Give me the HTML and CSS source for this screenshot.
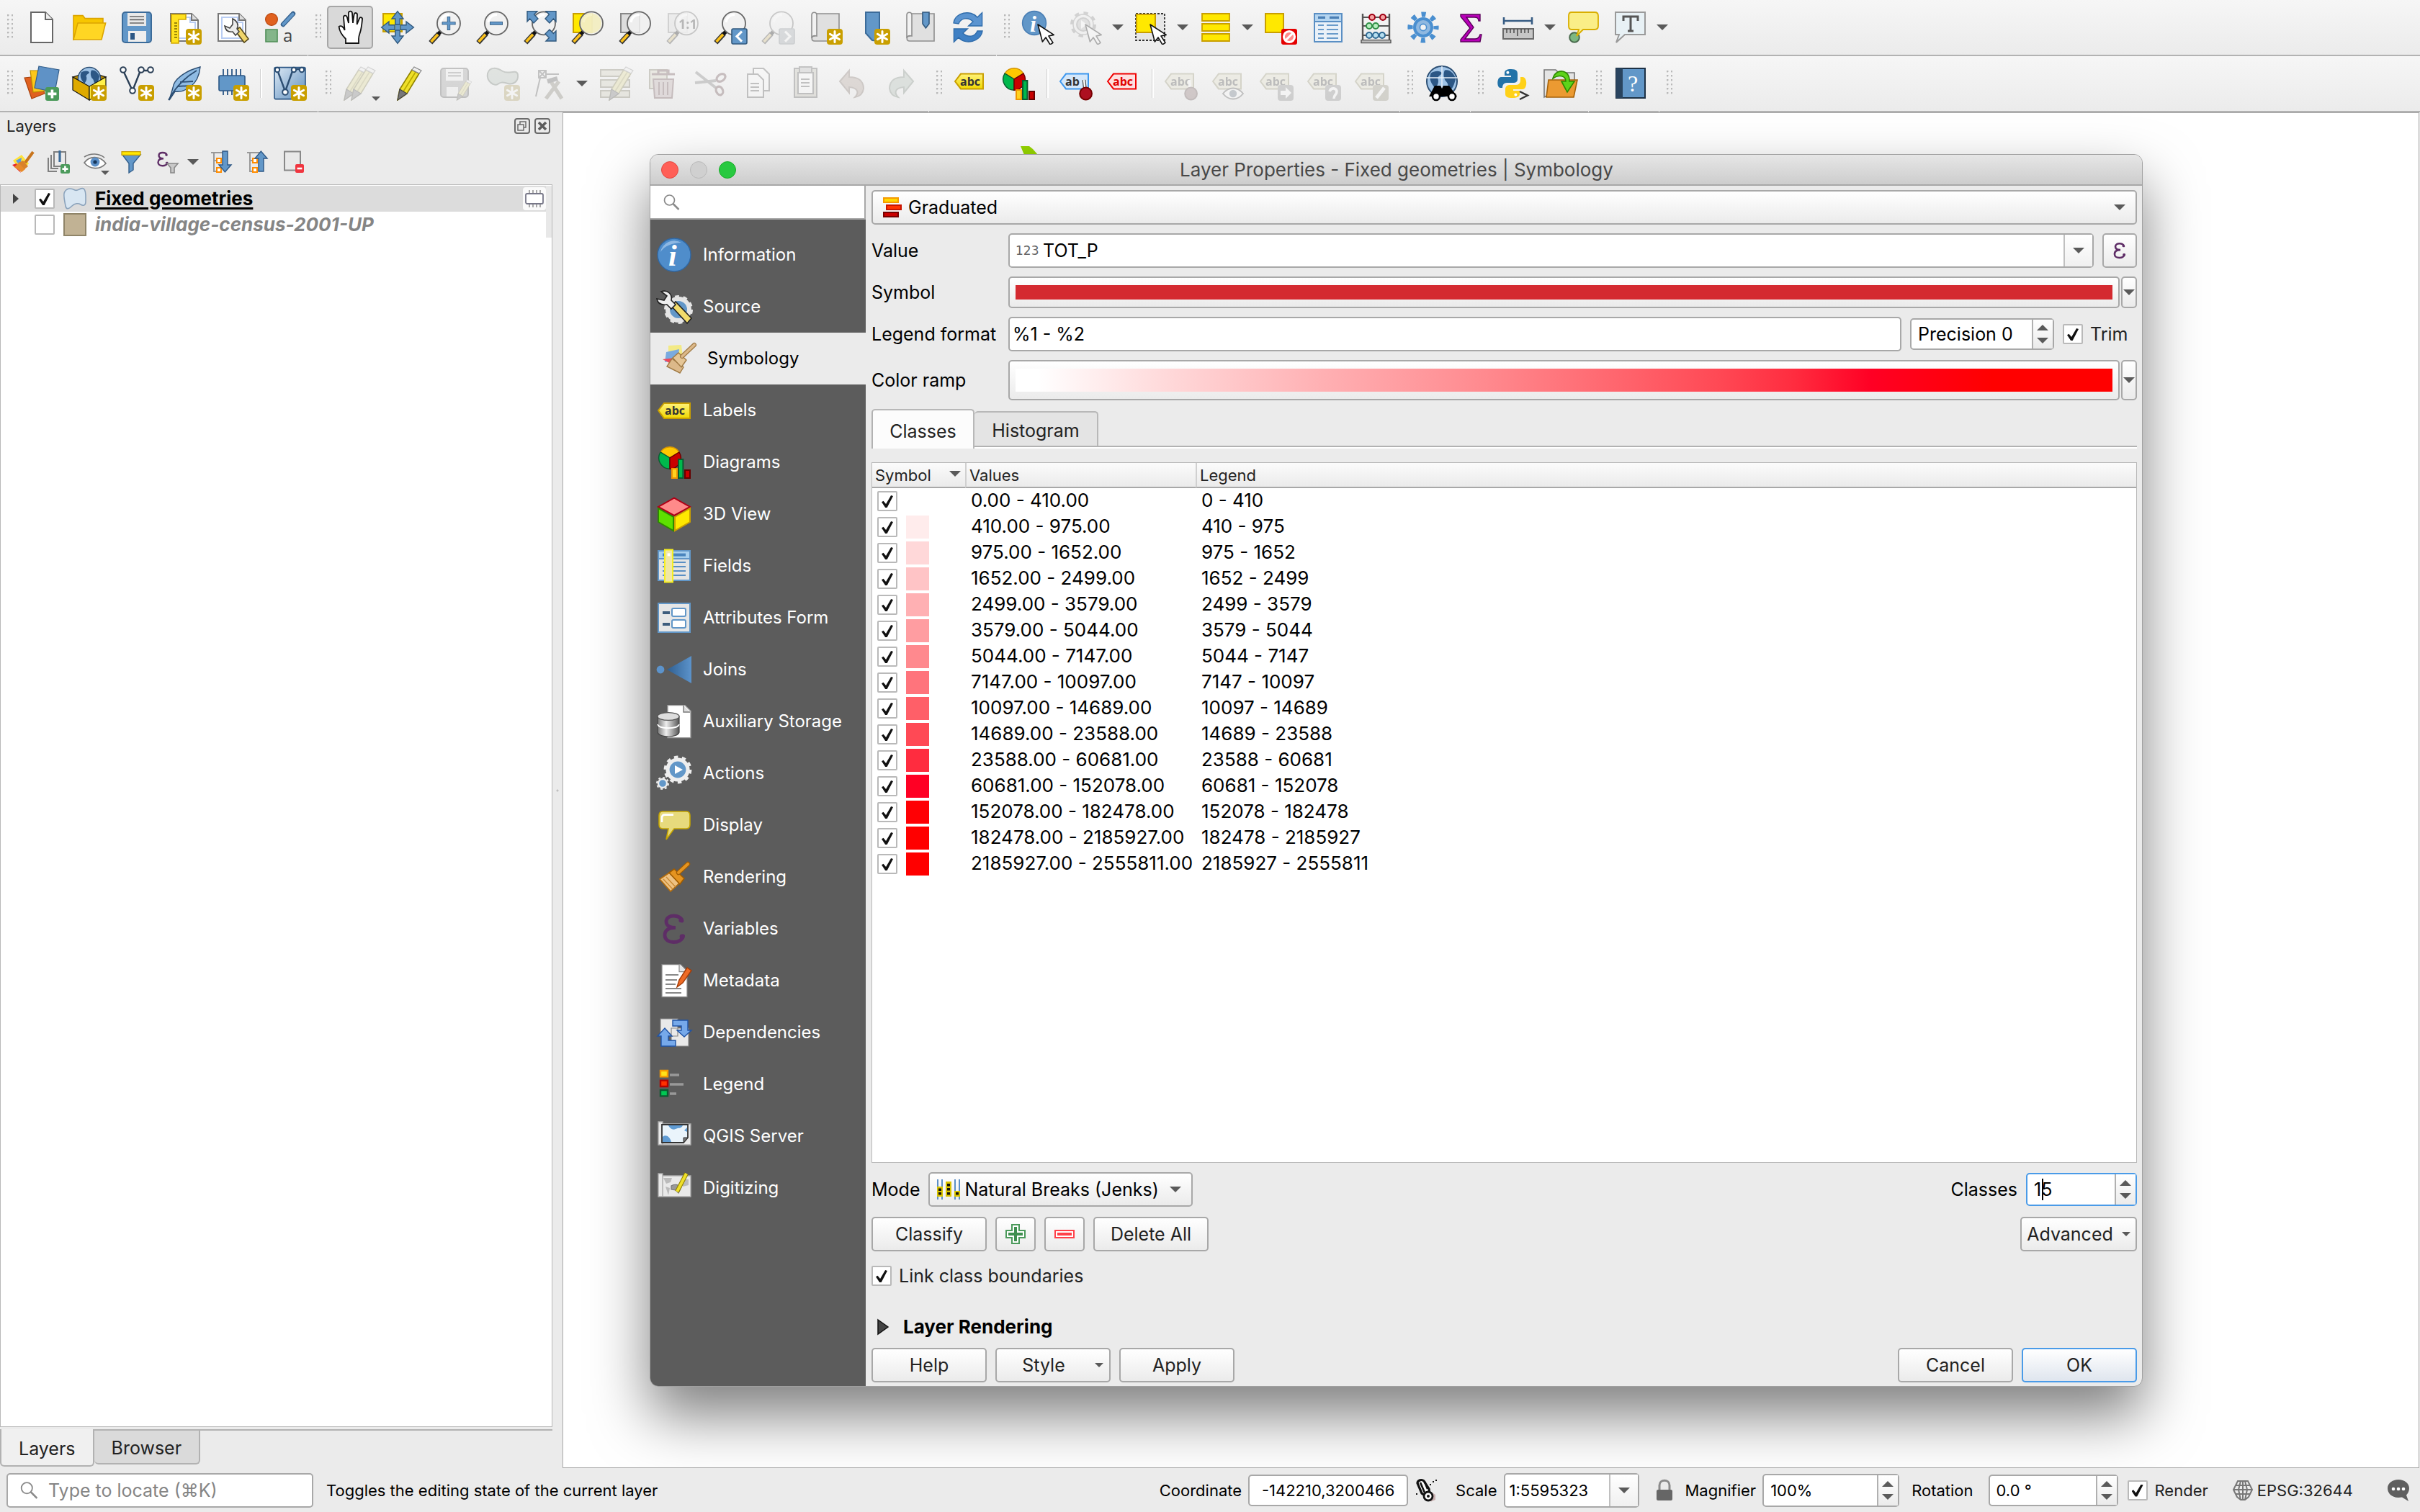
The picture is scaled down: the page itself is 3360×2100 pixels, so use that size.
FILE: index.html
```html
<!DOCTYPE html>
<html lang="en">
<head>
    <meta charset="UTF-8">
    <meta name="viewport" content="width=device-width, initial-scale=1.0">
    <title>Layer Properties - Fixed geometries | Symbology</title>
    <link rel="stylesheet" href="styles.css">
</head>
<body>
    <!-- shared icon parts -->
    <svg class="defs" width="0" height="0">
        <defs>
            <linearGradient id="g-blue" x1="0" y1="0" x2="1" y2="1"><stop offset="0" stop-color="#dbe8f4"/><stop offset="1" stop-color="#5f8fbf"/></linearGradient>
            <linearGradient id="g-yellow" x1="0" y1="0" x2="0" y2="1"><stop offset="0" stop-color="#fff27a"/><stop offset="1" stop-color="#f0d800"/></linearGradient>
            <linearGradient id="g-join" x1="0" y1="0" x2="1" y2="0"><stop offset="0" stop-color="#2f5f91"/><stop offset="1" stop-color="#5c93cb"/></linearGradient>
            <linearGradient id="g-disk" x1="0" y1="0" x2="1" y2="0"><stop offset="0" stop-color="#777"/><stop offset=".4" stop-color="#eee"/><stop offset="1" stop-color="#555"/></linearGradient>
        </defs>
        <symbol id="badge-new" viewBox="0 0 24 24">
            <rect x="13" y="13" width="11" height="11" rx="2" fill="#c99f00"/>
            <path d="M18.5 14.7v7.6M15.2 16.6l6.6 3.8M21.8 16.6l-6.6 3.8" stroke="#fff" stroke-width="1.5" stroke-linecap="round"/>
        </symbol>
        <symbol id="mag" viewBox="0 0 24 24">
            <path d="M1.9 22.6L7.6 16.4" stroke="#333" stroke-width="3.4"/>
            <path d="M2.3 22L7 16.9" stroke="#fcc21b" stroke-width="1.8"/>
            <path d="M7.2 16.8L9.4 14.4" stroke="#111" stroke-width="2.6"/>
            <circle cx="14.5" cy="9.2" r="8" fill="#f1f1f1" fill-opacity=".85" stroke="#666" stroke-width=".9"/>
            <path d="M9 8.5a5.8 5.8 0 0 1 6-5.3" stroke="#fff" stroke-width="1.6" fill="none"/>
        </symbol>
        <symbol id="cursor" viewBox="0 0 24 24">
            <path d="M11.5 10l3.2 12 2.3-3 3 5 2-1.3-3-4.7 3.6-.8z" fill="#fff" stroke="#111" stroke-width=".8" stroke-linejoin="round"/>
        </symbol>
        <symbol id="scroll" viewBox="0 0 24 24">
            <path d="M5 2.5h16.5v19H4.5C2 21.5 2 18 4.5 18z" fill="#e0e0e0" stroke="#8e8e8e" stroke-width=".8"/>
            <path d="M2.5 19.5V3.5C2.5 1 6 1 6 3.5V18C4 17.5 2.5 18 2.5 19.5z" fill="#f2f2f2" stroke="#8e8e8e" stroke-width=".8"/>
        </symbol>
        <symbol id="tag-grey" viewBox="0 0 24 24">
            <path d="M1 10.5L5 5.3h15.5v10.4H5z" fill="#e7e0a4" stroke="#9d9340"/>
            <text x="4.5" y="13.5" class="tag-text" fill="#444">abc</text>
        </symbol>
        <symbol id="tag-yellow" viewBox="0 0 24 24">
            <path d="M1 12L5 7h18v10.500H5z" fill="url(#g-yellow)" stroke="#c99f00"/>
            <text x="5.5" y="15" class="tag-text" fill="#333">abc</text>
        </symbol>
        <symbol id="arrow-up" viewBox="0 0 24 24">
            <path d="M12 .8L16 6h-2.400v4h-3.200V6H8z" fill="#6297c8" stroke="#30587d" stroke-width=".7"/>
        </symbol>
        <symbol id="diagram" viewBox="0 0 24 24">
            <path d="M9 9L2.5 5A7.6 7.6 0 0 1 15.5 5z" fill="#ffc800" stroke="#d69500" stroke-width=".7"/>
            <path d="M9 9v7.600A7.6 7.6 0 0 1 2.5 5z" fill="#00b84c" stroke="#0a5a30" stroke-width=".7"/>
            <path d="M9 9v7.600A7.6 7.6 0 0 0 15.5 5z" fill="#c80000" stroke="#600" stroke-width=".7"/>
            <path d="M10.5 16.500h3.500v6.500h-3.500z" fill="#ffd21f" stroke="#f09600"/>
            <path d="M15 10h3.200v13H15z" fill="#00b84c" stroke="#0a5a30"/>
            <path d="M19.5 17.500h3.500v5.500h-3.500z" fill="#c80000" stroke="#600"/>
        </symbol>
        <symbol id="page" viewBox="0 0 24 24">
            <path d="M2.5 2.500h14.500l4.500 4.500v14.500h-19z" fill="#fff" stroke="#777"/>
            <path d="M5 5h11v3.500h3.500v11H5z" fill="none" stroke="#b9cdf3"/>
            <path d="M17 2.500v4.500h4.500" fill="#ddd" stroke="#777"/>
        </symbol>
        <symbol id="search" viewBox="0 0 24 24">
            <circle cx="9.5" cy="9" r="7" fill="none" stroke="#8a8a8a" stroke-width="1.7"/>
            <path d="M14.5 14l8 8" stroke="#8a8a8a" stroke-width="2.5"/>
        </symbol>
        <symbol id="down" viewBox="0 0 16 8"><path d="M0 0h16L8 8z" fill="#5a5a5a"/></symbol>
        <symbol id="up" viewBox="0 0 16 8"><path d="M0 8h16L8 0z" fill="#5a5a5a"/></symbol>
        <symbol id="epsilon" viewBox="0 0 24 24">
            <path d="M17.5 6.500C17 2 6.500 1.500 6.500 7c0 3 3 4.200 6.500 4.200-4.500 0-7.500 1.300-7.500 5.300 0 6.500 12 6 12.800.5" fill="none" stroke="#5e2d66" stroke-width="2.4" stroke-linecap="round"/>
            <circle cx="16.8" cy="6" r="1.6" fill="#5e2d66"/><circle cx="17.5" cy="17.5" r="1.7" fill="#5e2d66"/>
        </symbol>
        <symbol id="globe" viewBox="0 0 24 24">
            <circle cx="12" cy="12" r="11" fill="#9fc3e6" stroke="#2c4f74"/>
            <path d="M4 6c3-2 7-2 8 0-1 2-3 2-3 4 1 2 0 5-2 7-2-3-5-6-3-11zM14 4c4-1 7 3 8 6-1 4-2 7-4 8-2-2-1-4-3-6-2-2-2-6-1-8z" fill="#2c5785"/>
        </symbol>
        <symbol id="pencil" viewBox="0 0 24 24">
            <path d="M5 23.500L6.500 16 15 2.500l5 2.500-8.500 14z" fill="#efe02a" stroke="#8f8200" stroke-width=".8"/>
            <path d="M9 17.500L17.500 4" stroke="#b8a800" stroke-width=".8"/>
            <path d="M5 23.500L6.500 16l5 3z" fill="#777" stroke="#444" stroke-width=".6"/>
            <path d="M15 2.500L16.500.5l5 2.500-1.500 2z" fill="#eee" stroke="#888" stroke-width=".6"/>
        </symbol>
    </svg>

    <div class="app">
        <div class="toolbar">
            <div class="group">
                <span class="handle"></span>
                <button class="tool" aria-label="New project"><svg viewBox="0 0 24 24"><path d="M4.500 1.500h10l5 5v16h-15z" fill="#fff" stroke="#666"/><path d="M14.500 1.500v5h5" fill="#eee" stroke="#666"/></svg></button>
                <button class="tool" aria-label="Open project"><svg viewBox="0 0 24 24"><path d="M1 20.500V3.800h6.500l1.500 2h12.500V12z" fill="#f7c600" stroke="#dba400" stroke-width=".8"/><path d="M1 20.500L4 9h19.300L20.500 20.500z" fill="#ffd623" stroke="#dba400" stroke-width=".8"/></svg></button>
                <button class="tool" aria-label="Save project"><svg viewBox="0 0 24 24"><rect x="2" y="1.5" width="20" height="21" rx="2" fill="#6297c8" stroke="#3b6b99"/><path d="M5.500 2h13v9h-13z" fill="#e9e9e9"/><path d="M7 4.500h10M7 6.700h10M7 9h10" stroke="#666" stroke-width=".8"/><path d="M6 14.500h12.500v7.500H6z" fill="#eee"/><path d="M7.500 16h3v4.500h-3z" fill="#2c5785"/></svg></button>
                <button class="tool" aria-label="New print layout"><svg viewBox="0 0 24 24"><use href="#page"/><path d="M3 3h10v3.500H8V23H3z" fill="#ffe21f" stroke="#d3a900" stroke-width=".8"/><path d="M5 9h2M5 11h2M5 13h2M5 15h2M5 17h2M5 19h2" stroke="#7a6700" stroke-width=".7"/><use href="#badge-new"/></svg></button>
                <button class="tool" aria-label="Layout manager"><svg viewBox="0 0 24 24"><use href="#page"/><path d="M14 14l6.500 8.500 3-2.500-6-8z" fill="#f0d56a" stroke="#55471a" stroke-width=".8"/><path d="M12.500 6c3 1.500 4.500 4 3 7l1.500 2-2.500 2.500-2-2.500c-3 .5-5-1-5.500-4l3.500 1.500 2-2.500z" fill="#ececec" stroke="#444" stroke-width=".8"/></svg></button>
                <button class="tool" aria-label="Style manager"><svg viewBox="0 0 24 24"><circle cx="6.5" cy="6.5" r="4.2" fill="#e0611f" stroke="#b8460e" stroke-width=".6"/><path d="M14.500 10l7-7.500" stroke="#335f8c" stroke-width="3.2" stroke-linecap="round"/><path d="M14.700 9.800l6.600-7" stroke="#6297c8" stroke-width="2" stroke-linecap="round"/><path d="M2.500 13.500h8v8.500h-8z" fill="#84b58a" stroke="#4f8e57" stroke-width=".8"/><text x="14.5" y="22" font-size="12" font-family="Open Sans, sans-serif" fill="#444">a</text></svg></button>
            </div>
            <div class="group">
                <span class="handle"></span>
                <button class="tool active" aria-label="Pan map"><svg viewBox="0 0 24 24"><path d="M9 23V20C6.500 17.500 4.500 14 4.300 11.500c1.500-1.200 3 0 4 2.500L7.500 5c0-1.500 2-1.700 2.400-.2L11 9 11 2c0-1.600 2.300-1.600 2.500 0L14 9l.8-6c.3-1.500 2.300-1.200 2.200.3L16.800 10l1.700-4.200c.5-1.300 2.300-.7 2 .7-.3 3-.5 6-1.500 9-.5 1.500-1 2.500-1 4.500v3z" fill="#fff" stroke="#111" stroke-width=".9"/></svg></button>
                <button class="tool" aria-label="Pan map to selection"><svg viewBox="0 0 24 24"><path d="M2 2.500h13v12.500H2z" fill="#ffe800" stroke="#c99f00"/><path d="M10.500 10h3v4h-3z" fill="#6297c8"/><use href="#arrow-up"/><use href="#arrow-up" transform="rotate(90 12 12)"/><use href="#arrow-up" transform="rotate(180 12 12)"/><use href="#arrow-up" transform="rotate(270 12 12)"/></svg></button>
                <button class="tool" aria-label="Zoom in"><svg viewBox="0 0 24 24"><use href="#mag"/><path d="M14.500 4.500v9.500M9.800 9.200h9.500" stroke="#30587d" stroke-width="2.2"/><path d="M14.500 4.900v8.700M10.200 9.200h8.700" stroke="#6297c8" stroke-width="1.5"/></svg></button>
                <button class="tool" aria-label="Zoom out"><svg viewBox="0 0 24 24"><use href="#mag"/><path d="M10 9.200h9" stroke="#30587d" stroke-width="2.4"/><path d="M10.400 9.200h8.200" stroke="#6297c8" stroke-width="1.6"/></svg></button>
                <button class="tool" aria-label="Zoom full"><svg viewBox="0 0 24 24"><use href="#mag"/><path d="M3 .8h7L7.800 3l2.700 3-3 3-2.700-3L3 8zM23 .8h-7L18.200 3l-2.700 3 3 3 2.700-3L23 8zM23 21.500h-7l2.200-2.200-2.700-2.800 3-3 2.700 2.800 1.800-1.800z" fill="#6297c8" stroke="#30587d" stroke-width=".7"/></svg></button>
                <button class="tool" aria-label="Zoom to selection"><svg viewBox="0 0 24 24"><path d="M2 2.500h13v13H2z" fill="#ffe800" stroke="#c99f00"/><use href="#mag"/><circle cx="14.5" cy="9.2" r="7" fill="#f3edb0" opacity=".7"/></svg></button>
                <button class="tool" aria-label="Zoom to layer"><svg viewBox="0 0 24 24"><path d="M2 2.500h13v13H2z" fill="#ddd" stroke="#888"/><use href="#mag"/></svg></button>
                <button class="tool" disabled aria-label="Zoom native"><svg viewBox="0 0 24 24"><path d="M2 2.500h13v13H2z" fill="#ddd" stroke="#888"/><use href="#mag"/><text x="9" y="13" font-size="9" font-weight="700" font-family="Open Sans, sans-serif" fill="#333">1:1</text></svg></button>
                <button class="tool" aria-label="Zoom last"><svg viewBox="0 0 24 24"><use href="#mag"/><rect x="13" y="13" width="10.5" height="10.5" rx="1" fill="#6297c8" stroke="#30587d" stroke-width=".8"/><path d="M20 14.800l-3.500 3.500 3.500 3.500" stroke="#fff" stroke-width="1.6" fill="none"/></svg></button>
                <button class="tool" disabled aria-label="Zoom next"><svg viewBox="0 0 24 24"><use href="#mag"/><rect x="13" y="13" width="10.5" height="10.5" rx="1" fill="#9ab" stroke="#789" stroke-width=".8"/><path d="M17 14.800l3.500 3.500-3.500 3.500" stroke="#fff" stroke-width="1.6" fill="none"/></svg></button>
                <button class="tool" aria-label="New map view"><svg viewBox="0 0 24 24"><use href="#scroll"/><use href="#badge-new"/></svg></button>
                <button class="tool" aria-label="New bookmark"><svg viewBox="0 0 24 24"><path d="M7 1.500h9.500v20L11.500 21 7 16z" fill="#6297c8" stroke="#3b6b99"/><use href="#badge-new"/></svg></button>
                <button class="tool" aria-label="Show bookmarks"><svg viewBox="0 0 24 24"><use href="#scroll"/><path d="M13.500 1.500h4.500v8l-2.300 3-2.200-3z" fill="#6297c8" stroke="#30587d" stroke-width=".8"/></svg></button>
                <button class="tool" aria-label="Refresh"><svg viewBox="0 0 24 24"><path d="M2 9C3 1.500 14 -.5 18.500 5l3.300-3.200V11h-9.500l3.200-3C12 4.500 7 5.500 5.500 9.500z" fill="#5b94d0" stroke="#2f6cab" stroke-width=".7"/><path d="M22 14.500C21 22 10 24.500 5.500 19l-3.300 3.200V13h9.500l-3.200 3c3.500 3.500 8.500 2.500 10-1.500z" fill="#3f80c4" stroke="#2f6cab" stroke-width=".7"/></svg></button>
            </div>
            <div class="group wide">
                <span class="handle"></span>
                <button class="tool" aria-label="Identify features"><svg viewBox="0 0 24 24"><circle cx="9" cy="9" r="8.2" fill="#6297c8" stroke="#4a7fb5" stroke-width=".8"/><text x="6" y="15" font-size="16" font-weight="700" font-style="italic" font-family="Liberation Serif, serif" fill="#fff">i</text><use href="#cursor"/></svg></button>
                <button class="tool menu" disabled aria-label="Run feature action"><svg viewBox="0 0 24 24"><circle cx="10" cy="10" r="8" fill="#eee" stroke="#888" stroke-width="2" stroke-dasharray="3.14 3.14"/><circle cx="10" cy="10" r="7" fill="#eee" stroke="#888" stroke-width=".7"/><circle cx="10" cy="10" r="4.5" fill="#bbb" stroke="#888"/><path d="M8.500 7v6l4-3z" fill="#fff"/><use href="#cursor"/></svg><svg class="drop"><use href="#down"/></svg></button>
                <button class="tool menu" aria-label="Select features"><svg viewBox="0 0 24 24"><path d="M1.500 2.500h20v18.500h-20z" fill="#e6e6e6" stroke="#333" stroke-width=".9" stroke-dasharray="1.500 1"/><path d="M2 3h13v12.500H2z" fill="#ffe800" stroke="#c99f00"/><use href="#cursor"/></svg><svg class="drop"><use href="#down"/></svg></button>
                <button class="tool menu" aria-label="Select by value"><svg viewBox="0 0 24 24"><path d="M2.500 2.500h19v5h-19zM2.500 9.500h19v5h-19zM2.500 16.500h19v5h-19z" fill="#ffe800" stroke="#c99f00" stroke-width=".9"/></svg><svg class="drop"><use href="#down"/></svg></button>
                <button class="tool" aria-label="Deselect"><svg viewBox="0 0 24 24"><path d="M1.500 2.500h12.500V15.500H1.500z" fill="#ffe800" stroke="#c99f00"/><rect x="12.5" y="13" width="11" height="11" rx="1.5" fill="#e50000"/><circle cx="18" cy="18.5" r="3.8" fill="#ff8a8a" stroke="#fff" stroke-width="1.5"/><path d="M15.500 21l5-5" stroke="#fff" stroke-width="1.5"/></svg></button>
                <button class="tool" aria-label="Open attribute table"><svg viewBox="0 0 24 24"><path d="M2.500 2.500h19v19.500h-19z" fill="#eaf1f8" stroke="#5a8fc4"/><path d="M2.500 2.500h19v5.500h-19z" fill="#b5d5f0" stroke="#5a8fc4"/><path d="M5 5.200h5M13 5.200h6.500" stroke="#4a7fb5" stroke-width="1.6"/><path d="M5 10.500h4M11 10.500h8M5 13.500h4M11 13.500h8M5 16.500h4M11 16.500h8M5 19.500h4M11 19.500h8" stroke="#6a9bca" stroke-width="1.1"/></svg></button>
                <button class="tool" aria-label="Field calculator"><svg viewBox="0 0 24 24"><path d="M3 2.500v19M21.500 2.500v19" stroke="#555" stroke-width="1.2"/><path d="M3 5h18.500M3 11h18.500M3 17.500h18.500" stroke="#555" stroke-width=".9"/><g fill="#f5a3a3" stroke="#a00014"><circle cx="9.5" cy="5" r="2"/><circle cx="17" cy="5" r="2"/></g><g fill="#b8efc0" stroke="#2f8f46"><circle cx="7.5" cy="11" r="2"/><circle cx="12" cy="11" r="2"/></g><g fill="#b8dff0" stroke="#306a94"><circle cx="7.5" cy="17.5" r="2"/><circle cx="12" cy="17.5" r="2"/><circle cx="16.5" cy="17.5" r="2"/></g><path d="M2 20.800h20.500v2H2z" fill="#bbb" stroke="#555" stroke-width=".7"/></svg></button>
                <button class="tool" aria-label="Processing toolbox"><svg viewBox="0 0 24 24"><circle cx="12" cy="12" r="9" fill="none" stroke="#4a8fd0" stroke-width="3.6" stroke-dasharray="3 4.07" stroke-dashoffset="1.5"/><circle cx="12" cy="12" r="6" fill="#8fb8e0" stroke="#4a8fd0" stroke-width="2"/><circle cx="12" cy="12" r="2.3" fill="#f2f2f2" stroke="#4a8fd0" stroke-width=".8"/></svg></button>
                <button class="tool" aria-label="Statistical summary"><svg viewBox="0 0 24 24"><path d="M5 3h13.500v4.500h-1c-.3-2-1-2.500-3-2.500H9l5 7-6 8h7c2 0 3-1 3.500-3h1l-1 5H5v-1.500L11.500 12.500 5 4.500z" fill="#b800b8" stroke="#5c005c" stroke-width=".7"/></svg></button>
                <button class="tool menu" aria-label="Measure line"><svg viewBox="0 0 24 24"><path d="M2 7.500h19.500M2 5v5M21.500 5v5" stroke="#385d84" stroke-width="1.3"/><path d="M1.500 13h21v7h-21z" fill="#c6c6c6" stroke="#6a6a6a"/><path d="M4 13v3M6.500 13v3M9 13v3M11.500 13v5M14 13v3M16.500 13v3M19 13v3" stroke="#444" stroke-width=".7"/></svg><svg class="drop"><use href="#down"/></svg></button>
                <button class="tool" aria-label="Map tips"><svg viewBox="0 0 24 24"><circle cx="6" cy="19" r="3.4" fill="#7cb782" stroke="#4b6b4e"/><path d="M4 1.500h16c2 0 2.500 1 2.500 2.500v7c0 2-1 2.500-2.500 2.500h-8L7.500 18l1.500-4.500H4c-1.500 0-2-1-2-2.500V4c0-1.500.5-2.500 2-2.500z" fill="#faee87" stroke="#d9ae00" stroke-width=".9"/></svg></button>
                <button class="tool menu" aria-label="Text annotation"><svg viewBox="0 0 24 24"><path d="M1.500 1.500h20.500v15.500H8L2 22.500 4 17H1.500z" fill="#e8f1f5" stroke="#9a9a9a"/><path d="M7 7.500v-3h10v3M12 4.500v10M10 14.500h4" fill="none" stroke="#555" stroke-width="1.5"/></svg><svg class="drop"><use href="#down"/></svg></button>
            </div>
        </div>

        <div class="toolbar">
            <div class="group">
                <span class="handle"></span>
                <button class="tool" aria-label="Data source manager"><svg viewBox="0 0 24 24"><path d="M0 8l10-1 4 12-9 3.500z" fill="#e0611f" stroke="#a8410c" stroke-width=".6"/><path d="M4 3h12v14l-10 1z" fill="#fcc71a" stroke="#b98b00" stroke-width=".6"/><path d="M10 0l14 2.500-3 15.500L7 15z" fill="#5f92c6" stroke="#335f8c" stroke-width=".6"/><rect x="14.5" y="14.5" width="9.5" height="9.5" rx="1.5" fill="#4b9a5b"/><path d="M19.200 16.200v6M16.200 19.200h6" stroke="#fff" stroke-width="1.8"/></svg></button>
                <button class="tool" aria-label="New GeoPackage layer"><svg viewBox="0 0 24 24"><path d="M.5 7.500L12 4l11.500 3.500L12 14z" fill="#b98b00" stroke="#111" stroke-width=".6"/><use href="#globe" x="3.500" y="0" width="17" height="17"/><path d="M.5 7.500L12 14v9.500L.5 16.500z" fill="#deaa00" stroke="#111" stroke-width=".6"/><path d="M23.500 7.500L12 14v9.500l11.500-7z" fill="#fff04a" stroke="#111" stroke-width=".6"/><use href="#badge-new"/></svg></button>
                <button class="tool" aria-label="New shapefile layer"><svg viewBox="0 0 24 24"><path d="M2.500 3L9 17l5.500-14h7" fill="none" stroke="#2b3f56" stroke-width="1.2"/><g fill="#fff" stroke="#2b3f56"><circle cx="2.500" cy="2.500" r="1.9"/><circle cx="9" cy="17" r="1.9"/><circle cx="15" cy="2.500" r="1.9"/><circle cx="21.500" cy="2.500" r="1.9"/></g><use href="#badge-new"/></svg></button>
                <button class="tool" aria-label="New SpatiaLite layer"><svg viewBox="0 0 24 24"><path d="M1.500 23.500L4 15C4.500 9 13 3 23 .5c-.5 5-2 10-6.500 13.500-3 2.500-7 4-11 3.500z" fill="#8fbbe3" stroke="#2b4d72" stroke-width=".7"/><path d="M1 23.500C6 14 12 8 20.500 3M9 11l9-.5M7 14l9-.5" stroke="#2b4d72" stroke-width=".9" fill="none"/><use href="#badge-new"/></svg></button>
                <button class="tool" aria-label="New memory layer"><svg viewBox="0 0 24 24"><path d="M6 2v18M9 2v18M12 2v18M15 2v14M18 2v14" stroke="#2c5785" stroke-width=".9"/><rect x="3" y="6.5" width="18" height="10.5" rx="1" fill="#6297c8" stroke="#2c5785" stroke-width=".8"/><use href="#badge-new"/></svg></button>
                <span class="sep"></span>
                <button class="tool" aria-label="New virtual layer"><svg viewBox="0 0 24 24"><rect x="1.5" y=".8" width="21.5" height="22" rx="1" fill="url(#g-blue)" stroke="#2c5785" stroke-width=".8"/><path d="M3.500 2.500L9 17.500 14.500 2h8" fill="none" stroke="#2b4d72" stroke-width="1.2"/><g fill="#fff" stroke="#2b4d72"><circle cx="3.500" cy="2.500" r="1.6"/><circle cx="9" cy="18" r="1.9"/><circle cx="15" cy="2.500" r="1.6"/><circle cx="20.500" cy="2.500" r="1.6"/></g><use href="#badge-new"/></svg></button>
            </div>
            <div class="group">
                <span class="handle"></span>
                <button class="tool corner" disabled aria-label="Current edits"><svg viewBox="0 0 24 24"><use href="#pencil" x="-4"/><use href="#pencil" x="1"/></svg><svg class="drop"><use href="#down"/></svg></button>
                <button class="tool" aria-label="Toggle editing"><svg viewBox="0 0 24 24"><use href="#pencil"/></svg></button>
                <button class="tool" disabled aria-label="Save layer edits"><svg viewBox="0 0 24 24"><rect x="2" y="1.5" width="19" height="20" rx="2" fill="#999" stroke="#555"/><path d="M5.500 2h12v8h-12z" fill="#eee"/><path d="M7 4.500h9M7 6.700h9" stroke="#555" stroke-width=".8"/><path d="M6 14.500h8v6.500H6z" fill="#eee"/><use href="#pencil" x="10" y="9" width="15" height="15"/></svg></button>
                <button class="tool" disabled aria-label="Add polygon"><svg viewBox="0 0 24 24"><path d="M1.500 5C3 0 8 1 12 3.500s10-2 10.500 2.500-3 7-7 6-5-1-7 .5S.5 11 1.500 5z" fill="#a9c4ae" stroke="#5c7560"/><use href="#badge-new"/></svg></button>
                <button class="tool menu" disabled aria-label="Vertex tool"><svg viewBox="0 0 24 24"><path d="M4 3h5v5H4zM4 3l5 5M9 3L4 8M9 5.500h9M5 8L2 21" fill="none" stroke="#555"/><path d="M9 22.500l9-12M12 10l8 12.500" stroke="#888060" stroke-width="2.6"/><path d="M10 10.500l7-2" stroke="#555" stroke-width="3"/></svg><svg class="drop"><use href="#down"/></svg></button>
                <button class="tool" disabled aria-label="Modify attributes"><svg viewBox="0 0 24 24"><path d="M2 2.500h20v4.500H2zM2 9.500h20v5H2zM2 17h20v4.500H2z" fill="#d8d2a0" stroke="#7f7840"/><use href="#pencil" x="3"/></svg></button>
                <button class="tool" disabled aria-label="Delete selected"><svg viewBox="0 0 24 24"><path d="M3 2.500h12v13H3z" fill="#d8d2a0" stroke="#7f7840"/><path d="M4.500 5.500h16M9 5V3h7v2" stroke="#8b3f48" stroke-width="1.6" fill="none"/><path d="M5.500 9h14l-1 13h-12z" fill="#d3a2a8" stroke="#8b3f48"/><path d="M9.500 11v9M12.500 11v9M15.500 11v9" stroke="#8b3f48"/></svg></button>
                <button class="tool" disabled aria-label="Cut features"><svg viewBox="0 0 24 24"><path d="M2 4l14 11M1.500 11.500L16 10" stroke="#777" stroke-width="2"/><g fill="none" stroke="#8b3f48" stroke-width="1.6"><ellipse cx="19.500" cy="8" rx="3.300" ry="2.300" transform="rotate(-35 19.500 8)"/><ellipse cx="18.500" cy="17" rx="2.300" ry="3" transform="rotate(-25 18.500 17)"/></g></svg></button>
                <button class="tool" disabled aria-label="Copy features"><svg viewBox="0 0 24 24"><g fill="#fff" stroke="#555"><path d="M9 1.500h7l4 4v11.500H9z"/><path d="M5 5.500h7l4 4v12H5z"/></g><path d="M7 12h6M7 14.500h6M7 17h6" stroke="#555"/></svg></button>
                <button class="tool" disabled aria-label="Paste features"><svg viewBox="0 0 24 24"><path d="M4.500 1.500h15.500v20H4.500z" fill="#c2bd9e" stroke="#555"/><path d="M7 4.500h10.500v14.500H7z" fill="#fff" stroke="#555"/><path d="M8 .5h8.500v4H8z" fill="#bbb" stroke="#555"/><path d="M9 9h6M9 11.500h6M9 14h6" stroke="#555"/></svg></button>
                <button class="tool" disabled aria-label="Undo"><svg viewBox="0 0 24 24"><path d="M3 10.500L9.500 3v4.500c6 0 10 2.500 10 8-.5 4-3 5.500-6 6 2.500-2.500 3-6.500-4-7v4z" fill="#c69a84" stroke="#8f6b58"/></svg></button>
                <button class="tool" disabled aria-label="Redo"><svg viewBox="0 0 24 24"><path d="M21 10.500L14.500 3v4.500c-6 0-10 2.500-10 8 .5 4 3 5.500 6 6-2.500-2.500-3-6.500 4-7v4z" fill="#9fc1a8" stroke="#6a8a72"/></svg></button>
            </div>
            <div class="group">
                <span class="handle"></span>
                <button class="tool" aria-label="Labeling options"><svg viewBox="0 0 24 24"><path d="M1 10.500L5 5.300h15.500v10.400H5z" fill="url(#g-yellow)" stroke="#c99f00"/><text x="4.5" y="13.5" class="tag-text" fill="#333">abc</text></svg></button>
                <button class="tool" aria-label="Diagram options"><svg viewBox="0 0 24 24"><use href="#diagram"/></svg></button>
                <span class="sep"></span>
                <button class="tool" aria-label="Pinned labels"><svg viewBox="0 0 24 24"><path d="M1 10.500L5 5.300h15.500v10.400H5z" fill="#d4e7fa" stroke="#3d97ee"/><text x="4.5" y="13.5" class="tag-text" fill="#333">ab</text><path d="M17.500 9.500l.8 7" stroke="#444" stroke-width="2.4"/><path d="M17.500 9.500l.8 7" stroke="#fff" stroke-width="1.2"/><circle cx="18.800" cy="19" r="4.2" fill="#ad1020" stroke="#700"/></svg></button>
                <button class="tool" aria-label="Unplaced labels"><svg viewBox="0 0 24 24"><path d="M1 10.500L5 5.300h15.500v10.400H5z" fill="#fde0e0" stroke="#f00000"/><text x="4.5" y="13.5" class="tag-text" fill="#e00000">abc</text></svg></button>
                <span class="sep"></span>
                <button class="tool" disabled aria-label="Pin labels"><svg viewBox="0 0 24 24"><use href="#tag-grey"/><path d="M17.500 9.500l.8 7" stroke="#fff" stroke-width="2"/><circle cx="18.800" cy="19" r="4.2" fill="#a66" stroke="#744"/></svg></button>
                <button class="tool" disabled aria-label="Show hidden labels"><svg viewBox="0 0 24 24"><use href="#tag-grey"/><path d="M8 19c4-5 10-5 14 0-4 5-10 5-14 0z" fill="#fff" stroke="#555"/><circle cx="15" cy="19" r="2.6" fill="#579"/></svg></button>
                <button class="tool" disabled aria-label="Move label"><svg viewBox="0 0 24 24"><use href="#tag-grey"/><rect x="13" y="13" width="11" height="11" rx="2" fill="#888"/><path d="M15 17h3.500v-2.500l4 4-4 4V20H15z" fill="#fff"/></svg></button>
                <button class="tool" disabled aria-label="Rotate label"><svg viewBox="0 0 24 24"><use href="#tag-grey"/><rect x="13" y="13" width="11" height="11" rx="2" fill="#888"/><path d="M16 17.500c1-3 5-2.500 5 0s-2 2-2 5" fill="none" stroke="#fff" stroke-width="1.8"/></svg></button>
                <button class="tool" disabled aria-label="Change label"><svg viewBox="0 0 24 24"><use href="#tag-grey"/><rect x="13" y="13" width="11" height="11" rx="2" fill="#9a9060"/><path d="M15.500 22l5.500-7" stroke="#fff" stroke-width="2.4"/></svg></button>
            </div>
            <div class="group">
                <span class="handle"></span>
                <button class="tool" aria-label="Metasearch"><svg viewBox="0 0 24 24"><use href="#globe" x="0" y="-1" width="24" height="23"/><path d="M1 8h22M12 0v18" stroke="#e8f0f8" stroke-width=".7"/><path d="M7 13.500h4l1 2 1-2h4l5.500 7.500H3z" fill="#000"/><g fill="#fff" stroke="#000" stroke-width="1.3"><circle cx="8" cy="21" r="2.500"/><circle cx="19" cy="21" r="2.500"/></g></svg></button>
            </div>
            <div class="group">
                <span class="handle"></span>
                <button class="tool" aria-label="Python console"><svg viewBox="0 0 24 24"><path d="M11 2c4 0 4.500 1.500 4.500 3.500V9c0 2-1.500 2.500-3 2.500H8c-2 0-3 1.500-3 3.500H3.500C1 15 1 7.500 4 7.500h7V6.500H6.500V4.500C6.500 3 8 2 11 2z" fill="#2272a8"/><path d="M12 22c-4 0-5-1-5-3v-3c0-2 1.500-3 3-3h4.500c2 0 3-1.500 3-3.500V7.500H19c3.500 0 3.500 8.500 0 8.500h-6.500v1H17v2.500c0 1.500-2 2.500-5 2.500z" fill="#ffd118"/><circle cx="8.700" cy="4.400" r="1" fill="#fff"/><circle cx="14.200" cy="19.800" r="1" fill="#fff"/><path d="M17 17.500l5.500 2.800L17 23" fill="none" stroke="#333" stroke-width="1.2"/></svg></button>
                <button class="tool" aria-label="Reload plugin"><svg viewBox="0 0 24 24"><path d="M1 21.500V2.500h8l2 2h11v6z" fill="#e4e4e4" stroke="#777" stroke-width=".8"/><path d="M2.500 21.500L4 9.500h20l-2.500 12z" fill="#eb9a32" stroke="#a56209" stroke-width=".8"/><path d="M7 8.500C9 1 19 2 18.500 10.500H22L17 18l-4-7.500h3c0-4-5-5-9-2z" fill="#5ed31a" stroke="#2c8a00" stroke-width=".8"/></svg></button>
            </div>
            <div class="group">
                <span class="handle"></span>
                <button class="tool" aria-label="Help contents"><svg viewBox="0 0 24 24"><path d="M2 1.500h20v20.500H2z" fill="#6297c8" stroke="#1d3145"/><path d="M2 1.500h4.500v20.500H2z" fill="#29445f"/><text x="10" y="17.5" font-size="16" font-family="Liberation Serif, serif" fill="#fff">?</text></svg></button>
            </div>
            <div class="group wide">
                <span class="handle"></span>
            </div>
        </div>

        <div class="workspace">
            <div class="dock">
                <div class="dock-title">
                    <span>Layers</span>
                    <button class="dock-btn" aria-label="Float"><svg viewBox="0 0 22 22"><rect x="1" y="1" width="20" height="20" rx="3" fill="none" stroke="#6b6b6b" stroke-width="2"/><path d="M8 9V5h8v8h-3M5 9h8v8H5z" fill="none" stroke="#6b6b6b" stroke-width="1.5"/></svg></button>
                    <button class="dock-btn" aria-label="Close"><svg viewBox="0 0 22 22"><rect x="1" y="1" width="20" height="20" rx="3" fill="none" stroke="#6b6b6b" stroke-width="2"/><path d="M6 6l10 10M16 6L6 16" stroke="#5b5b5b" stroke-width="3.5"/></svg></button>
                </div>
                <div class="dock-tools">
                    <button class="mini" aria-label="Styling panel"><svg viewBox="0 0 16 16"><path d="M1 7l6-4 5 6-5 6z" fill="#ffe23a"/><path d="M.5 10l3-1 3 6.500z" fill="#e8262b"/><path d="M3 7l4-2-1 6z" fill="#5b9be0"/><path d="M5.500 8l4 5-2.500 2-5-3.500z" fill="#e88a2a"/><path d="M5 8.500l3-1.500 3.500 4L9 13z" fill="#d9822b"/><path d="M9.500 8.500L15 1" stroke="#c8741c" stroke-width="2"/></svg></button>
                    <button class="mini" aria-label="Add group"><svg viewBox="0 0 16 16"><path d="M.5 5v9.500h6M2.500 3v9.500h5M4.500 1h8v10h-8z" fill="none" stroke="#808080"/><path d="M8.500 0v8" stroke="#3b6b99" stroke-width="1.6"/><rect x="9" y="9.5" width="6.5" height="6.5" rx="1" fill="#4b9a5b"/><path d="M12.200 10.800v4M10.200 12.800h4" stroke="#fff" stroke-width="1.3"/></svg></button>
                    <button class="mini corner" aria-label="Manage map themes"><svg viewBox="0 0 16 16"><path d="M.5 8.500C4 3.500 11.500 3.500 15.500 9c-4 4.500-11 4.500-15-.5z" fill="#fff" stroke="#777" stroke-width=".8"/><path d="M.5 4.500C5 1.500 11 2 14.500 5" stroke="#777" stroke-width=".8" fill="none"/><circle cx="8" cy="8" r="3.2" fill="#5b8fc7"/><circle cx="8" cy="8" r="1.3" fill="#16365a"/></svg><svg class="drop"><use href="#down"/></svg></button>
                    <button class="mini" aria-label="Filter legend"><svg viewBox="0 0 16 16"><path d="M2 3l4.500 6v6.500l3-2V9L14.500 3z" fill="#6297c8" stroke="#335f8c" stroke-width=".7"/><path d="M1.500.8h13v2.400h-13z" fill="#ffe800" stroke="#c99f00" stroke-width=".6"/></svg></button>
                    <button class="mini menu" aria-label="Filter by expression"><svg viewBox="0 0 16 16"><use href="#epsilon" x="-1" y="0" width="12" height="12"/><path d="M8 9h7.500L13 12v3.500h-2.500V12z" fill="#c8c8c8" stroke="#888" stroke-width=".8"/></svg><svg class="drop"><use href="#down"/></svg></button>
                    <button class="mini" aria-label="Expand all"><svg viewBox="0 0 16 16"><path d="M1 1.500h10M3 1.500v13h3M3 7h3" stroke="#999" fill="none"/><path d="M5 5.500h3v3H5zM5 12h3v3H5z" fill="#fff" stroke="#ff8c00"/><path d="M9 .5h3.500V10H15l-4.300 5L6.500 10H9z" fill="#6297c8" stroke="#2c5785" stroke-width=".7"/></svg></button>
                    <button class="mini" aria-label="Collapse all"><svg viewBox="0 0 16 16"><path d="M1 1.500h10M3 1.500v13h3M3 7h3" stroke="#999" fill="none"/><path d="M5 5.500h3v3H5zM5 12h3v3H5z" fill="#fff" stroke="#ff8c00"/><path d="M9 14.500h3.500V5.500H15L10.700.5 6.500 5.500H9z" fill="#6297c8" stroke="#2c5785" stroke-width=".7"/></svg></button>
                    <button class="mini" aria-label="Remove layer"><svg viewBox="0 0 16 16"><path d="M2 .8h11v13H2z" fill="#e9e9e9" stroke="#888"/><rect x="9.5" y="9.5" width="6" height="6" rx="1" fill="#f0353f"/><path d="M10.800 12.500h3.400" stroke="#fff" stroke-width="1.3"/></svg></button>
                </div>
                <div class="tree">
                    <div class="tree-row selected">
                        <svg class="branch" viewBox="0 0 8 14"><path d="M0 0l8 7-8 7z" fill="#444"/></svg>
                        <input type="checkbox" id="layer1" class="check" checked>
                        <svg class="layer-ico" viewBox="0 0 16 16"><path d="M1 3c2-3 5-2 7-1s4-2 6-1 1.500 6 1.500 9-2 3-3.500 2-4-1-6 1-4 3-4.500 0S-.5 5 1 3z" fill="#d8e6f2" stroke="#8aa2bb" stroke-width=".8"/></svg>
                        <label for="layer1" class="layer-name current">Fixed geometries</label>
                        <span class="indicator"><svg viewBox="0 0 16 16"><path d="M4.500 2v12M7 2v12M9.500 2v12M12 2v12" stroke="#888" stroke-width=".7"/><rect x="2" y="4.5" width="12" height="7" rx="1" fill="#fff" stroke="#778" stroke-width=".9"/></svg></span>
                    </div>
                    <div class="tree-row">
                        <span class="branch"></span>
                        <input type="checkbox" id="layer2" class="check">
                        <span class="layer-ico fill-tan"></span>
                        <label for="layer2" class="layer-name hidden-layer">india-village-census-2001-UP</label>
                    </div>
                </div>
                <div class="dock-tabs">
                    <button class="dock-tab on">Layers</button>
                    <button class="dock-tab">Browser</button>
                </div>
            </div>
            <div class="splitter"></div>

            <div class="canvas">
                <svg class="feature" viewBox="0 0 24 12"><path d="M0 0h12l5 4 7 8H5z" fill="#97d700"/></svg>

                <div class="dialog">
                    <div class="titlebar">
                        <button class="light red" aria-label="Close"></button>
                        <button class="light grey" aria-label="Minimize"></button>
                        <button class="light green" aria-label="Zoom"></button>
                        <h1>Layer Properties - Fixed geometries | Symbology</h1>
                    </div>
                    <div class="dialog-body">
                        <div class="sidebar">
                            <label class="side-search"><svg><use href="#search"/></svg><input type="text" aria-label="Search"></label>
                            <ul>
                                <li><svg viewBox="0 0 24 24"><circle cx="12" cy="12" r="11.5" fill="#4f8dcb" stroke="#2f68a5" stroke-width=".7"/><path d="M2.500 10A9.800 9.800 0 0 1 17 3.500C11 3.500 5 6 2.500 10z" fill="#a9cbec" opacity=".7"/><text x="8" y="19.5" font-size="21" font-weight="700" font-style="italic" font-family="Liberation Serif, serif" fill="#fff">i</text></svg>Information</li>
                                <li><svg viewBox="0 0 24 24"><circle cx="15" cy="14" r="7.5" fill="#6297c8" stroke="#e5e5e5" stroke-width="3"/><circle cx="15" cy="14" r="9.2" fill="none" stroke="#e5e5e5" stroke-width="1.6" stroke-dasharray="2.9 2.9"/><path d="M10 11.500l3-3L24 20l-3 3.500z" fill="#f2dc6c" stroke="#222" stroke-width=".8"/><path d="M3 1.500c4-1.500 8 1.500 7 6l3 3-3 3-3-3c-4 .5-6.500-1-7-4l5 1L7 4.500z" fill="#eee" stroke="#222" stroke-width=".8"/></svg>Source</li>
                                <li class="on"><svg viewBox="0 0 24 24"><path d="M5 3l9-.5 1 8-10 5z" fill="#f3ea86"/><path d="M3.500 7.500l9-2-1 8-9 1z" fill="#7aaae0"/><path d="M1 12.500l9-1 4 8z" fill="#f0475a"/><path d="M7.500 12l8 6-2.500 4-9-4.500z" fill="#dcb98a" stroke="#a07a45" stroke-width=".7"/><path d="M8 11.500l4-3.500 5.500 5-3.500 5z" fill="#e5c697" stroke="#a07a45" stroke-width=".7"/><path d="M14.500 10.500L23 2.500" stroke="#a07a45" stroke-width="3" stroke-linecap="round"/><path d="M14.500 10.500L23 2.500" stroke="#dcb98a" stroke-width="1.8" stroke-linecap="round"/></svg>Symbology</li>
                                <li><svg viewBox="0 0 24 24"><use href="#tag-yellow"/></svg>Labels</li>
                                <li><svg viewBox="0 0 24 24"><use href="#diagram"/></svg>Diagrams</li>
                                <li><svg viewBox="0 0 24 24"><path d="M12 .8l11 6.200-11 6-11-6z" fill="#ff8a8a" stroke="#b00016"/><path d="M1 8l10.500 6v9.500L1 17.500z" fill="#5ee000" stroke="#2d8a00"/><path d="M23 8l-10.500 6v9.500L23 17.500z" fill="#ffe800" stroke="#c99f00"/></svg>3D View</li>
                                <li><svg viewBox="0 0 24 24"><path d="M1 1.500h22v20.500H1z" fill="#e4e4e4" stroke="#6297c8"/><path d="M1 1.500h22v5.500H1z" fill="#a8d0ee" stroke="#6297c8"/><path d="M4 4.300h16" stroke="#4a85bd" stroke-width="2"/><path d="M4 9.500h16M4 12.500h16M4 15.500h16M4 18.500h16" stroke="#5a8fc4" stroke-width="1.1"/><path d="M5.500.8h5.500v22.400H5.500z" fill="#f0e7a5" stroke="#f5ee20"/><path d="M7.300 3.200h2v2h-2z" fill="#fff"/></svg>Fields</li>
                                <li><svg viewBox="0 0 24 24"><path d="M1 2h22v20H1z" fill="#e6e6e6" stroke="#6297c8"/><path d="M4 8.500h5M4 16.500h5" stroke="#3d5c7c" stroke-width="2"/><rect x="10.5" y="5.5" width="9.5" height="5.5" rx="1" fill="#fff" stroke="#6297c8"/><rect x="10.5" y="13.5" width="9.5" height="5.5" rx="1" fill="#fff" stroke="#6297c8"/></svg>Attributes Form</li>
                                <li><svg viewBox="0 0 24 24"><circle cx="2.500" cy="12" r="2.7" fill="#5c93cb"/><path d="M7 12L24 2.500v19z" fill="url(#g-join)"/></svg>Joins</li>
                                <li><svg viewBox="0 0 24 24"><path d="M7.500.8h12l4 4v18.500h-16z" fill="#fff" stroke="#999" stroke-width=".7"/><path d="M18.500 1v4.500H23" fill="#ddd" stroke="#777" stroke-width=".7"/><path d="M.5 8.500v11c1 4 14 4 15 0v-11z" fill="url(#g-disk)" stroke="#444" stroke-width=".6"/><ellipse cx="8" cy="8.500" rx="7.500" ry="2.700" fill="#ddd" stroke="#555" stroke-width=".6"/><path d="M.5 14c1 3.500 14 3.500 15 0" fill="none" stroke="#fff" stroke-width=".9"/></svg>Auxiliary Storage</li>
                                <li><svg viewBox="0 0 24 24"><circle cx="14.500" cy="9.500" r="7" fill="#6297c8" stroke="#eee" stroke-width="2.6"/><circle cx="14.500" cy="9.500" r="8.8" fill="none" stroke="#eee" stroke-width="1.8" stroke-dasharray="2.76 2.76"/><path d="M12.500 6.500v6l5.500-3z" fill="#fff"/><circle cx="4" cy="19" r="3" fill="#6297c8" stroke="#eee" stroke-width="1.2"/><circle cx="4" cy="19" r="4" fill="none" stroke="#eee" stroke-dasharray="1.57 1.57"/></svg>Actions</li>
                                <li><svg viewBox="0 0 24 24"><path d="M4 2.500h16.500c1.500 0 2.500 1 2.500 3v6c0 2-1 3-2.500 3H12L6.500 22 8 14.500H4c-1.500 0-2.500-1-2.500-3v-6c0-2 1-3 2.500-3z" fill="#e7da7c" stroke="#c4a400" stroke-width=".8"/><path d="M3.500 10V7c0-1.500.5-2.200 2-2.200h6" fill="none" stroke="#fff" stroke-width="1.3"/></svg>Display</li>
                                <li><svg viewBox="0 0 24 24"><path d="M2 13.500l7.500-5 7 7-7 6.500z" fill="#eec283" stroke="#b36c0c" stroke-width=".8"/><path d="M4.500 13.500l6.500 7M6.500 12l6.500 7" stroke="#c98a35" stroke-width=".7"/><path d="M8.500 9l3.500-2.500 7 6.500-3 4z" fill="#e59420" stroke="#a05c00" stroke-width=".8"/><path d="M15 9L21.500 3" stroke="#a05c00" stroke-width="3.2" stroke-linecap="round"/><path d="M15 9L21.500 3" stroke="#e59420" stroke-width="2" stroke-linecap="round"/></svg>Rendering</li>
                                <li><svg viewBox="0 0 24 24"><use href="#epsilon"/></svg>Variables</li>
                                <li><svg viewBox="0 0 24 24"><path d="M3.500.8h13l4.500 4.500v18h-17.500z" fill="#fff" stroke="#888" stroke-width=".6"/><path d="M15.500.8v5H21" fill="#e4e4e4" stroke="#888" stroke-width=".6"/><path d="M6 8h9M6 11.500h8M6 14.500h7M6 17.500h11M6 20.500h11" stroke="#888" stroke-width=".9"/><path d="M14 16.500l1.500-5L21 3l3 2-6 8.500z" fill="#ee6b25" stroke="#a33c08" stroke-width=".7"/></svg>Metadata</li>
                                <li><svg viewBox="0 0 24 24"><path d="M2.500 2.500h12v12h-12zM10 9h12v12.500H10z" fill="#e9e9e9" stroke="#888" stroke-width=".6"/><path d="M11 3.500h10.500v7H24l-5 4.500-5-4.500h3V7.500h-6z" fill="#76a9ea" stroke="#1f53a5" stroke-width=".7"/><path d="M13 21.500H3V14.500H.5L5.500 9l5 5.500H8V17.500h5z" fill="#76a9ea" stroke="#1f53a5" stroke-width=".7"/></svg>Dependencies</li>
                                <li><svg viewBox="0 0 24 24"><path d="M2.500 2.500h5v4.200h-5z" fill="#ffe11a" stroke="#f59a00" stroke-width="1.2"/><path d="M2.500 9.300h5v4.200h-5z" fill="#ff3000" stroke="#b40000" stroke-width="1.2"/><path d="M2.500 16h5v4.200h-5z" fill="#00c853" stroke="#0a5a30" stroke-width="1.2"/><path d="M9 5.500h6.500M9 12h9.500M9 18.500h4.500" stroke="#999" stroke-width="1.8"/></svg>Legend</li>
                                <li><svg viewBox="0 0 24 24"><path d="M1 2h3v16H1zM4 3.500h19.500V18H4z" fill="#e9e9e9" stroke="#aaa" stroke-width=".7"/><path d="M3.500 4h18v9l-3 3.500h-15z" fill="#eaf4fb" stroke="#333" stroke-width=".9"/><path d="M8 4.500h10c-1 2.500-3 1.500-5 2.500s-4-.5-5-2.500zM4 16v-3.500c2-2 5-.5 6 3.500zM21 6l-2 2 2 1z" fill="#5f9bd3"/><path d="M21.500 13h-3v3.500z" fill="#777" stroke="#333" stroke-width=".5"/></svg>QGIS Server</li>
                                <li><svg viewBox="0 0 24 24"><path d="M1 2h3v16H1zM4 3.500h19.500V18H4z" fill="#e9e9e9" stroke="#aaa" stroke-width=".7"/><path d="M4.500 5h6l-1 3-3 1zM6 11l3 1-1 5zM17 6h5v4l-4 1z" fill="#bbb"/><path d="M10 10.500c2-1.500 5-1 7 1l-2 4-2-2-3-.5z" fill="#999" stroke="#777" stroke-width=".6"/><path d="M14 14.500L20.500 2" stroke="#8f8200" stroke-width="3"/><path d="M14 14.500L20.500 2" stroke="#f0e02a" stroke-width="1.9"/></svg>Digitizing</li>
                            </ul>
                        </div>

                        <form class="pane">
                            <div class="combo">
                                <svg class="combo-ico" viewBox="0 0 28 28"><path d="M1 1h20v6H1z" fill="#ffd800" stroke="#f59a00" stroke-width="2"/><path d="M5 11h20v6H5z" fill="#ff3200" stroke="#c81400" stroke-width="2"/><path d="M1 21h20v6H1z" fill="#c80000" stroke="#700" stroke-width="2"/></svg>
                                <select aria-label="Renderer"><option>Graduated</option></select>
                                <svg class="drop"><use href="#down"/></svg>
                            </div>

                            <div class="row">
                                <label for="value" class="name">Value</label>
                                <div class="combo editable">
                                    <span class="type">123</span>
                                    <input type="text" id="value" value="TOT_P">
                                    <button type="button" class="combo-btn" aria-label="Choose field"><svg class="drop"><use href="#down"/></svg></button>
                                </div>
                                <button type="button" class="btn square" aria-label="Expression"><svg class="eps"><use href="#epsilon"/></svg></button>
                            </div>

                            <div class="row tight">
                                <label for="symbol" class="name">Symbol</label>
                                <button type="button" id="symbol" class="btn preview" aria-label="Symbol"><span class="solid"></span></button>
                                <button type="button" class="btn thin" aria-label="Symbol menu"><svg class="drop"><use href="#down"/></svg></button>
                            </div>

                            <div class="row">
                                <label for="format" class="name">Legend format</label>
                                <input type="text" id="format" class="field" value="%1 - %2">
                                <div class="spin precision">
                                    <input type="text" aria-label="Precision" value="Precision 0">
                                    <span class="steps"><button type="button" aria-label="Up"><svg><use href="#up"/></svg></button><button type="button" aria-label="Down"><svg><use href="#down"/></svg></button></span>
                                </div>
                                <label class="tick trim"><input type="checkbox" class="check" checked>Trim</label>
                            </div>

                            <div class="row tight">
                                <label for="ramp" class="name">Color ramp</label>
                                <button type="button" id="ramp" class="btn preview tall" aria-label="Color ramp"><span class="ramp"></span></button>
                                <button type="button" class="btn thin tall" aria-label="Color ramp menu"><svg class="drop"><use href="#down"/></svg></button>
                            </div>

                            <div class="tabs">
                                <button type="button" class="tab on">Classes</button>
                                <button type="button" class="tab">Histogram</button>
                            </div>

                            <div class="classes">
                                <table>
                                    <thead>
                                        <tr><th class="col-symbol">Symbol<svg class="drop"><use href="#down"/></svg></th><th class="col-values">Values</th><th>Legend</th></tr>
                                    </thead>
                                    <tbody>
                                        <tr><td><input type="checkbox" class="check" aria-label="Class 1" checked><i class="swatch" style="background: #ffffff"></i></td><td>0.00 - 410.00</td><td>0 - 410</td></tr>
                                        <tr><td><input type="checkbox" class="check" aria-label="Class 2" checked><i class="swatch" style="background: #ffecec"></i></td><td>410.00 - 975.00</td><td>410 - 975</td></tr>
                                        <tr><td><input type="checkbox" class="check" aria-label="Class 3" checked><i class="swatch" style="background: #ffd8d9"></i></td><td>975.00 - 1652.00</td><td>975 - 1652</td></tr>
                                        <tr><td><input type="checkbox" class="check" aria-label="Class 4" checked><i class="swatch" style="background: #ffc4c6"></i></td><td>1652.00 - 2499.00</td><td>1652 - 2499</td></tr>
                                        <tr><td><input type="checkbox" class="check" aria-label="Class 5" checked><i class="swatch" style="background: #ffb0b3"></i></td><td>2499.00 - 3579.00</td><td>2499 - 3579</td></tr>
                                        <tr><td><input type="checkbox" class="check" aria-label="Class 6" checked><i class="swatch" style="background: #ff9da1"></i></td><td>3579.00 - 5044.00</td><td>3579 - 5044</td></tr>
                                        <tr><td><input type="checkbox" class="check" aria-label="Class 7" checked><i class="swatch" style="background: #ff898e"></i></td><td>5044.00 - 7147.00</td><td>5044 - 7147</td></tr>
                                        <tr><td><input type="checkbox" class="check" aria-label="Class 8" checked><i class="swatch" style="background: #ff747c"></i></td><td>7147.00 - 10097.00</td><td>7147 - 10097</td></tr>
                                        <tr><td><input type="checkbox" class="check" aria-label="Class 9" checked><i class="swatch" style="background: #ff5f68"></i></td><td>10097.00 - 14689.00</td><td>10097 - 14689</td></tr>
                                        <tr><td><input type="checkbox" class="check" aria-label="Class 10" checked><i class="swatch" style="background: #ff4955"></i></td><td>14689.00 - 23588.00</td><td>14689 - 23588</td></tr>
                                        <tr><td><input type="checkbox" class="check" aria-label="Class 11" checked><i class="swatch" style="background: #ff2c3f"></i></td><td>23588.00 - 60681.00</td><td>23588 - 60681</td></tr>
                                        <tr><td><input type="checkbox" class="check" aria-label="Class 12" checked><i class="swatch" style="background: #ff0024"></i></td><td>60681.00 - 152078.00</td><td>60681 - 152078</td></tr>
                                        <tr><td><input type="checkbox" class="check" aria-label="Class 13" checked><i class="swatch" style="background: #ff0004"></i></td><td>152078.00 - 182478.00</td><td>152078 - 182478</td></tr>
                                        <tr><td><input type="checkbox" class="check" aria-label="Class 14" checked><i class="swatch" style="background: #ff0000"></i></td><td>182478.00 - 2185927.00</td><td>182478 - 2185927</td></tr>
                                        <tr><td><input type="checkbox" class="check" aria-label="Class 15" checked><i class="swatch" style="background: #ff0000"></i></td><td>2185927.00 - 2555811.00</td><td>2185927 - 2555811</td></tr>
                                    </tbody>
                                </table>
                            </div>

                            <div class="row">
                                <label for="mode">Mode</label>
                                <div class="combo mode">
                                    <svg class="mode-ico" viewBox="0 0 16 14"><path d="M.5 0v14M3.500 0v14M12.500 0v14M15.500 0v14" stroke="#5b8fc7"/><path d="M0 5h4v7H0zM6 1.500h4v10.500H6zM12 8h4v4h-4z" fill="#d9c400"/><path d="M1 6.200h2v1.800H1zM1 9h2v1.800H1zM7 3h2v1.800H7zM7 6h2v1.800H7zM7 9h2v1.800H7zM13 9h2v1.800h-2z" fill="#111"/></svg>
                                    <select id="mode"><option>Natural Breaks (Jenks)</option></select>
                                    <svg class="drop"><use href="#down"/></svg>
                                </div>
                                <span class="grow"></span>
                                <label for="classes">Classes</label>
                                <div class="spin focus">
                                    <input type="text" id="classes" value="15"><i class="caret"></i>
                                    <span class="steps"><button type="button" aria-label="Up"><svg><use href="#up"/></svg></button><button type="button" aria-label="Down"><svg><use href="#down"/></svg></button></span>
                                </div>
                            </div>

                            <div class="row actions">
                                <button type="button" class="btn">Classify</button>
                                <button type="button" class="btn icon" aria-label="Add class"><svg viewBox="0 0 28 28"><path d="M9 1h10v8h8v10h-8v8H9v-8H1V9h8z" fill="#fff" stroke="#4b9a5b" stroke-width="2"/><path d="M14 4v20M4 14h20" stroke="#3f8f50" stroke-width="4"/></svg></button>
                                <button type="button" class="btn icon" aria-label="Remove class"><svg viewBox="0 0 28 28"><path d="M1 9h26v10H1z" fill="#fff" stroke="#ff4049" stroke-width="2"/><path d="M4 14h20" stroke="#ff4049" stroke-width="4"/></svg></button>
                                <button type="button" class="btn">Delete All</button>
                                <span class="grow"></span>
                                <button type="button" class="btn advanced">Advanced<svg class="drop small"><use href="#down"/></svg></button>
                            </div>

                            <label class="tick link"><input type="checkbox" class="check" checked>Link class boundaries</label>

                            <h2><svg viewBox="0 0 16 22"><path d="M1 1l14 10L1 21z" fill="#444" stroke="#111" stroke-width="1.5"/></svg>Layer Rendering</h2>

                            <div class="row actions">
                                <button type="button" class="btn">Help</button>
                                <button type="button" class="btn style-btn">Style<svg class="drop small"><use href="#down"/></svg></button>
                                <button type="button" class="btn">Apply</button>
                                <span class="grow"></span>
                                <button type="button" class="btn">Cancel</button>
                                <button type="button" class="btn primary">OK</button>
                            </div>
                        </form>
                    </div>
                </div>
            </div>
        </div>

        <div class="statusbar">
            <label class="locator"><svg><use href="#search"/></svg><input type="text" aria-label="Locate" placeholder="Type to locate (⌘K)"></label>
            <span class="message">Toggles the editing state of the current layer</span>
            <label for="coord">Coordinate</label>
            <input type="text" id="coord" class="field coord" value="-142210,3200466">
            <svg class="extent" viewBox="0 0 16 16"><path d="M9.500 8l5 3v3.500l-3 1.300-5-3z" fill="#c9b0b0"/><path d="M2 3c0-2 3-3 4.500-1.500L10 7c1 3-3 5-5 3z" fill="#fff" stroke="#111" stroke-width="1.6"/><path d="M4 2.500l3 7M7 2l2 5" stroke="#111" stroke-width="1.3"/><circle cx="9.500" cy="12" r="3" fill="#fff" stroke="#111" stroke-width="1.4"/><circle cx="9.500" cy="12" r="1" fill="#111"/><path d="M10.500 4h1M12.500 2h1M14.500 1h1M1 10.500h1" stroke="#111"/></svg>
            <label for="scale">Scale</label>
            <div class="combo editable scale">
                <input type="text" id="scale" value="1:5595323">
                <button type="button" class="combo-btn" aria-label="Choose scale"><svg class="drop"><use href="#down"/></svg></button>
            </div>
            <svg class="lock" viewBox="0 0 24 30"><path d="M5 15V8c0-9 14-9 14 0v7" fill="none" stroke="#8b8b8b" stroke-width="3"/><rect x="1" y="14" width="22" height="15" rx="2" fill="#666"/></svg>
            <label for="magnifier">Magnifier</label>
            <div class="spin magnifier">
                <input type="text" id="magnifier" value="100%">
                <span class="steps"><button type="button" aria-label="Up"><svg><use href="#up"/></svg></button><button type="button" aria-label="Down"><svg><use href="#down"/></svg></button></span>
            </div>
            <label for="rotation">Rotation</label>
            <div class="spin rotation">
                <input type="text" id="rotation" value="0.0 °">
                <span class="steps"><button type="button" aria-label="Up"><svg><use href="#up"/></svg></button><button type="button" aria-label="Down"><svg><use href="#down"/></svg></button></span>
            </div>
            <label class="tick render"><input type="checkbox" class="check" checked>Render</label>
            <button class="crs"><svg viewBox="0 0 30 30"><path d="M8 2h14l6 12-5 10-5 4h-6l-5-4L2 14zM2 14h26M5 8h20M5 20h20M12 2L9 14l3 14M18 2l3 12-3 14M15 2v26" fill="none" stroke="#777" stroke-width="2"/></svg>EPSG:32644</button>
            <button class="bubble" aria-label="Messages"><svg viewBox="0 0 32 32"><path d="M16 1c8.500 0 15 5 15 12 0 4-1.500 7-4 9.500L30 31l-9-5.500C8 28 1 20.500 1 13 1 6 7.500 1 16 1z" fill="#5f5f5f"/><circle cx="9" cy="14" r="2.3" fill="#fff"/><circle cx="16" cy="14" r="2.3" fill="#fff"/><circle cx="23" cy="14" r="2.3" fill="#fff"/></svg></button>
        </div>
    </div>
</body>
</html>
```
FILE: styles.css
```css
* {
    box-sizing: border-box;
}

body {
    margin: 0;
    background: #ebebeb;
    color: #000;
    font-family: Inter, "Liberation Sans", sans-serif;
    font-size: 25px;
    line-height: 30px;
}

button, input, select {
    margin: 0;
    padding: 0;
    border: none;
    background: none;
    color: inherit;
    font: inherit;
    outline: none;
    appearance: none;
}

button {
    color: #222;
}

svg {
    display: block;
    flex: none;
    overflow: visible;
}

.defs {
    position: absolute;
}

.tag-text {
    font-family: "Open Sans", sans-serif;
    font-size: 8px;
    font-weight: 700;
}

.grow {
    flex: 1;
}

.drop {
    width: 16px;
    height: 8px;
}

.drop.small {
    width: 12px;
    height: 6px;
}

.app {
    display: flex;
    flex-direction: column;
    height: 100vh;
}

/* toolbars */
.toolbar {
    display: flex;
    gap: 1px;
    background: linear-gradient(#f6f6f6, #ebebeb);
}

.group {
    display: flex;
    align-items: center;
    gap: 2px;
    height: 78px;
    padding: 0 7px 0 10px;
    border-bottom: 2px solid #b2b2b2;
}

.group.wide {
    flex: 1;
}

.handle {
    width: 8px;
    height: 36px;
    margin-right: 6px;
    background: radial-gradient(circle at 1px 1px, #b8b8b8 1px, transparent 2px) 0 0 / 6px 6px;
}

.sep {
    width: 12px;
    height: 40px;
    background: linear-gradient(90deg, transparent 5px, #d0d0d0 5px, #d0d0d0 6px, #fff 6px, #fff 8px, transparent 8px);
}

.tool {
    position: relative;
    display: flex;
    align-items: center;
    width: 64px;
    height: 60px;
    padding-left: 8px;
}

.tool svg:first-child {
    width: 48px;
    height: 48px;
}

.tool.menu {
    width: 88px;
    gap: 12px;
}

.tool.active {
    padding-left: 6px;
    border: 2px solid #a6a6a6;
    border-radius: 5px;
    background: #d9d9d9;
}

.tool:disabled svg:first-child {
    opacity: .3;
    filter: grayscale(.6);
}

.corner .drop {
    position: absolute;
    right: 4px;
    bottom: 6px;
    width: 12px;
    height: 6px;
}

/* layers dock */
.workspace {
    flex: 1;
    display: flex;
    min-height: 0;
}

.dock {
    width: 767px;
    display: flex;
    flex-direction: column;
}

.dock-title {
    display: flex;
    align-items: center;
    gap: 6px;
    height: 37px;
    padding: 0 3px 0 9px;
    color: #222;
    font-size: 22px;
}

.dock-title span {
    flex: 1;
}

.dock-btn svg {
    width: 22px;
    height: 22px;
}

.dock-tools {
    display: flex;
    align-items: center;
    gap: 2px;
    height: 63px;
    padding-left: 8px;
}

.mini {
    position: relative;
    display: flex;
    align-items: center;
    gap: 12px;
    width: 48px;
    height: 48px;
    padding-left: 8px;
}

.mini svg:first-child {
    width: 32px;
    height: 32px;
}

.mini.menu {
    width: 73px;
}

.tree {
    flex: 1;
    border: 1px solid #b8b8b8;
    background: #fff;
    padding-top: 1px;
}

.tree-row {
    display: flex;
    align-items: center;
    height: 36px;
    padding: 0 0 0 17px;
    border-right: 8px solid #e8e8e8;
}

.tree-row.selected {
    background: #dcdcdc;
}

.branch {
    width: 8px;
    height: 14px;
    margin-right: 22px;
}

.layer-ico {
    width: 32px;
    height: 32px;
    margin: 0 12px;
}

.fill-tan {
    border: 2px solid #8f8468;
    background: #c1b294;
}

.layer-name {
    flex: 1;
    font-size: 26px;
    font-weight: 700;
}

.current {
    text-decoration: underline;
    text-decoration-thickness: 3px;
    text-underline-offset: 3px;
}

.hidden-layer {
    color: #858585;
    font-style: italic;
}

.indicator {
    width: 32px;
    height: 32px;
    border-radius: 4px;
    background: #fafafa;
}

.check {
    position: relative;
    flex: none;
    width: 28px;
    height: 28px;
    border: 2px solid #b9b9b9;
    border-radius: 2px;
    background: #fff;
}

.check:checked::before {
    content: "";
    position: absolute;
    inset: 4px 4px 3px;
    background: #111;
    clip-path: polygon(0 54%, 16% 46%, 38% 70%, 82% 0, 100% 6%, 48% 100%, 32% 100%);
}

.dock-tabs {
    display: flex;
    align-items: flex-start;
    height: 54px;
    margin-top: 3px;
    border-top: 2px solid #b2b2b2;
}

.dock-tab {
    height: 47px;
    padding: 2px 24px 0;
    border: 2px solid #b2b2b2;
    border-top: none;
    border-left: none;
    border-radius: 0 0 6px 6px;
    background: #dadada;
}

.dock-tab.on {
    height: 52px;
    margin-top: -2px;
    padding-top: 4px;
    border-left: 2px solid #b2b2b2;
    background: #f0f0f0;
}

.splitter {
    width: 14px;
    background: radial-gradient(circle, #c0c0c0 1px, transparent 2px) center / 6px 8px no-repeat;
}

/* map canvas */
.canvas {
    position: relative;
    flex: 1;
    margin-right: 1px;
    border: 1px solid #a8a8a8;
    background: #fff;
    overflow: hidden;
}

.feature {
    position: absolute;
    left: 635px;
    top: 46px;
    width: 24px;
    height: 12px;
}

/* properties window */
.dialog {
    position: absolute;
    inset: 57px 383px 112px 120px;
    display: flex;
    flex-direction: column;
    border: 1px solid #a0a0a0;
    border-radius: 12px;
    background: #ebebeb;
    overflow: hidden;
    box-shadow: 0 40px 80px rgba(0, 0, 0, .5);
}

.titlebar {
    display: flex;
    align-items: center;
    gap: 16px;
    height: 43px;
    padding: 0 15px;
    border-bottom: 2px solid #a8a8a8;
    background: linear-gradient(#e6e6e6, #cdcdcd);
}

.titlebar h1 {
    flex: 1;
    margin: 0 119px 0 0;
    color: #484848;
    font-size: 26px;
    font-weight: 400;
    text-align: center;
}

.light {
    width: 24px;
    height: 24px;
    border: 1px solid #b9b9b9;
    border-radius: 50%;
    background: #d0d0d0;
}

.light.red {
    border-color: #e2463f;
    background: #ff5f57;
}

.light.green {
    border-color: #1aab29;
    background: #28c940;
}

.dialog-body {
    flex: 1;
    display: flex;
    min-height: 0;
}

.sidebar {
    width: 299px;
    background: #5c5c5c;
    color: #fff;
    font-size: 24px;
}

.side-search {
    display: flex;
    align-items: center;
    height: 47px;
    padding-left: 17px;
    border: 2px solid #a8a8a8;
    border-top: none;
    border-left: none;
    background: #fff;
}

.side-search svg {
    width: 24px;
    height: 24px;
}

.side-search input {
    width: 200px;
}

.sidebar ul {
    margin: 0;
    padding: 13px 0 0;
    list-style: none;
}

.sidebar li {
    display: flex;
    align-items: center;
    gap: 16px;
    height: 72px;
    padding-left: 9px;
}

.sidebar li svg {
    width: 48px;
    height: 48px;
}

.sidebar li.on {
    padding-left: 15px;
    background: #ebebeb;
    color: #000;
}

.pane {
    flex: 1;
    min-width: 0;
    display: flex;
    flex-direction: column;
    padding: 6px 7px 5px 8px;
}

.row {
    display: flex;
    align-items: center;
    gap: 12px;
    margin-top: 12px;
}

.row.tight {
    gap: 2px;
}

.row.actions {
    margin-top: 14px;
}

.name {
    width: 178px;
}

.tight .name {
    width: 188px;
}

.combo, .field, .btn, .spin {
    height: 48px;
    border: 2px solid #a8a8a8;
    border-radius: 5px;
    background: linear-gradient(#fff, #ebebeb);
}

.combo {
    display: flex;
    align-items: center;
    padding: 0 14px;
}

.combo select {
    flex: 1;
}

.combo-ico {
    width: 28px;
    height: 28px;
    margin-right: 7px;
}

.combo.editable {
    flex: 1;
    padding: 0 0 0 8px;
    background: #fff;
}

.combo.editable input {
    flex: 1;
    min-width: 0;
}

.type {
    width: 38px;
    color: #666;
    font-family: "DejaVu Sans", sans-serif;
    font-size: 17px;
}

.combo-btn {
    display: flex;
    align-items: center;
    justify-content: center;
    align-self: stretch;
    width: 40px;
    border-left: 2px solid #c0c0c0;
    background: linear-gradient(#fff, #f0f0f0);
}

.field {
    flex: 1;
    min-width: 0;
    padding: 0 4px;
    background: #fff;
}

.btn {
    display: flex;
    align-items: center;
    justify-content: center;
    width: 160px;
}

.btn.square {
    width: 48px;
}

.eps {
    width: 26px;
    height: 26px;
}

.btn.icon {
    width: 56px;
}

.btn.icon svg {
    width: 28px;
    height: 28px;
}

.btn.advanced {
    width: 162px;
    gap: 12px;
}

.style-btn {
    position: relative;
    padding-right: 26px;
}

.style-btn .drop {
    position: absolute;
    right: 8px;
}

.btn.primary {
    border-color: #4a9be8;
    background: linear-gradient(#fff, #dfe5ee);
}

.btn.preview {
    flex: 1;
    height: 44px;
    padding: 0 8px;
}

.btn.thin {
    width: 22px;
    height: 44px;
}

.btn.tall {
    height: 56px;
}

.solid {
    flex: 1;
    height: 20px;
    background: #d42a30;
}

.ramp {
    flex: 1;
    height: 32px;
    background: linear-gradient(90deg, #fff 0, #fff 2%, #ffd8d9 14%, #ffb0b3 28%, #ff898e 43%, #ff5f68 57%, #ff4955 64%, #ff2c3f 71%, #ff0024 78%, #f00 89%);
}

.spin {
    position: relative;
    display: flex;
    width: 154px;
    height: 46px;
    background: #fff;
}

.spin input {
    flex: 1;
    min-width: 0;
    padding-left: 9px;
}

.steps {
    display: flex;
    flex-direction: column;
    justify-content: center;
    gap: 10px;
    width: 29px;
    padding-left: 5px;
    border-left: 2px solid #b0b0b0;
    background: linear-gradient(#fff, #ebebeb);
}

.steps svg {
    width: 16px;
    height: 8px;
}

.steps button {
    height: 8px;
}

.spin.precision {
    width: 200px;
    height: 44px;
}

.spin.focus {
    border-color: #4a9be8;
}

.caret {
    position: absolute;
    left: 20px;
    top: 6px;
    width: 2px;
    height: 30px;
    background: #000;
}

.tick {
    display: flex;
    align-items: center;
    gap: 10px;
    color: #222;
}

.tick.trim {
    width: 103px;
}

/* tabs and class list */
.tabs {
    display: flex;
    align-items: flex-end;
    height: 53px;
    margin-top: 12px;
    border-bottom: 2px solid #b2b2b2;
    box-shadow: 0 2px #fff;
}

.tab {
    width: 172px;
    height: 48px;
    padding-top: 4px;
    border: 2px solid #b8b8b8;
    border-bottom: none;
    border-left: none;
    border-radius: 5px 5px 0 0;
    background: #e4e4e4;
}

.tab.on {
    width: 143px;
    height: 55px;
    margin-bottom: -4px;
    border-left: 2px solid #b2b2b2;
    background: #fcfcfc;
}

.classes {
    flex: 1;
    min-height: 0;
    margin: 21px 0 1px;
    border: 1px solid #b8b8b8;
    background: #fff;
}

.classes table {
    width: 100%;
    border-collapse: separate;
    border-spacing: 0;
    table-layout: fixed;
    font-size: 26px;
}

.classes th {
    height: 35px;
    padding: 0 4px;
    border-bottom: 2px solid #a8a8a8;
    border-left: 2px solid #d0d0d0;
    background: linear-gradient(#fbfbfb, #ebebeb);
    color: #222;
    font-size: 22px;
    font-weight: 400;
    text-align: left;
}

.classes th:first-child {
    border-left: none;
}

.classes .drop {
    float: right;
    margin: 9px 2px;
}

.col-symbol {
    width: 129px;
}

.col-values {
    width: 320px;
}

.classes td {
    height: 36px;
    padding: 0 0 2px 8px;
    white-space: nowrap;
}

.classes td:first-child {
    display: flex;
    align-items: center;
    gap: 12px;
    padding: 0 0 0 7px;
}

.swatch {
    width: 32px;
    height: 32px;
}

.mode {
    width: 367px;
    padding: 0 14px 0 10px;
}

.mode-ico {
    width: 32px;
    height: 28px;
    margin-right: 6px;
}

.link {
    margin-top: 19px;
}

.pane h2 {
    display: flex;
    align-items: center;
    gap: 20px;
    margin: 41px 0 0;
    padding-left: 8px;
    font-size: 26px;
    font-weight: 700;
}

.pane h2 svg {
    width: 16px;
    height: 22px;
}

/* status bar */
.statusbar {
    display: flex;
    align-items: center;
    gap: 9px;
    height: 61px;
    padding: 0 14px 0 9px;
    font-size: 22px;
}

.locator {
    display: flex;
    align-items: center;
    gap: 14px;
    width: 426px;
    height: 48px;
    padding-left: 16px;
    border: 2px solid #a8a8a8;
    border-radius: 5px;
    background: #fff;
    font-size: 25px;
}

.locator svg {
    width: 26px;
    height: 26px;
}

.locator input::placeholder {
    color: #858585;
    opacity: 1;
}

.message {
    flex: 1;
    padding-left: 9px;
}

.field.coord {
    flex: none;
    width: 222px;
    height: 44px;
    text-align: center;
}

.extent {
    width: 32px;
    height: 32px;
    margin-right: 16px;
}

.combo.scale {
    flex: none;
    width: 188px;
    padding-left: 6px;
}

.lock {
    width: 24px;
    height: 30px;
    margin: 0 8px 0 14px;
}

.spin.magnifier {
    width: 190px;
    margin-right: 8px;
}

.spin.rotation {
    width: 180px;
    height: 44px;
    margin: 0 4px 0 12px;
}

.crs {
    display: flex;
    align-items: center;
    gap: 5px;
    margin: 0 38px 0 24px;
}

.crs svg {
    width: 30px;
    height: 30px;
}

.bubble svg {
    width: 32px;
    height: 32px;
}
```
